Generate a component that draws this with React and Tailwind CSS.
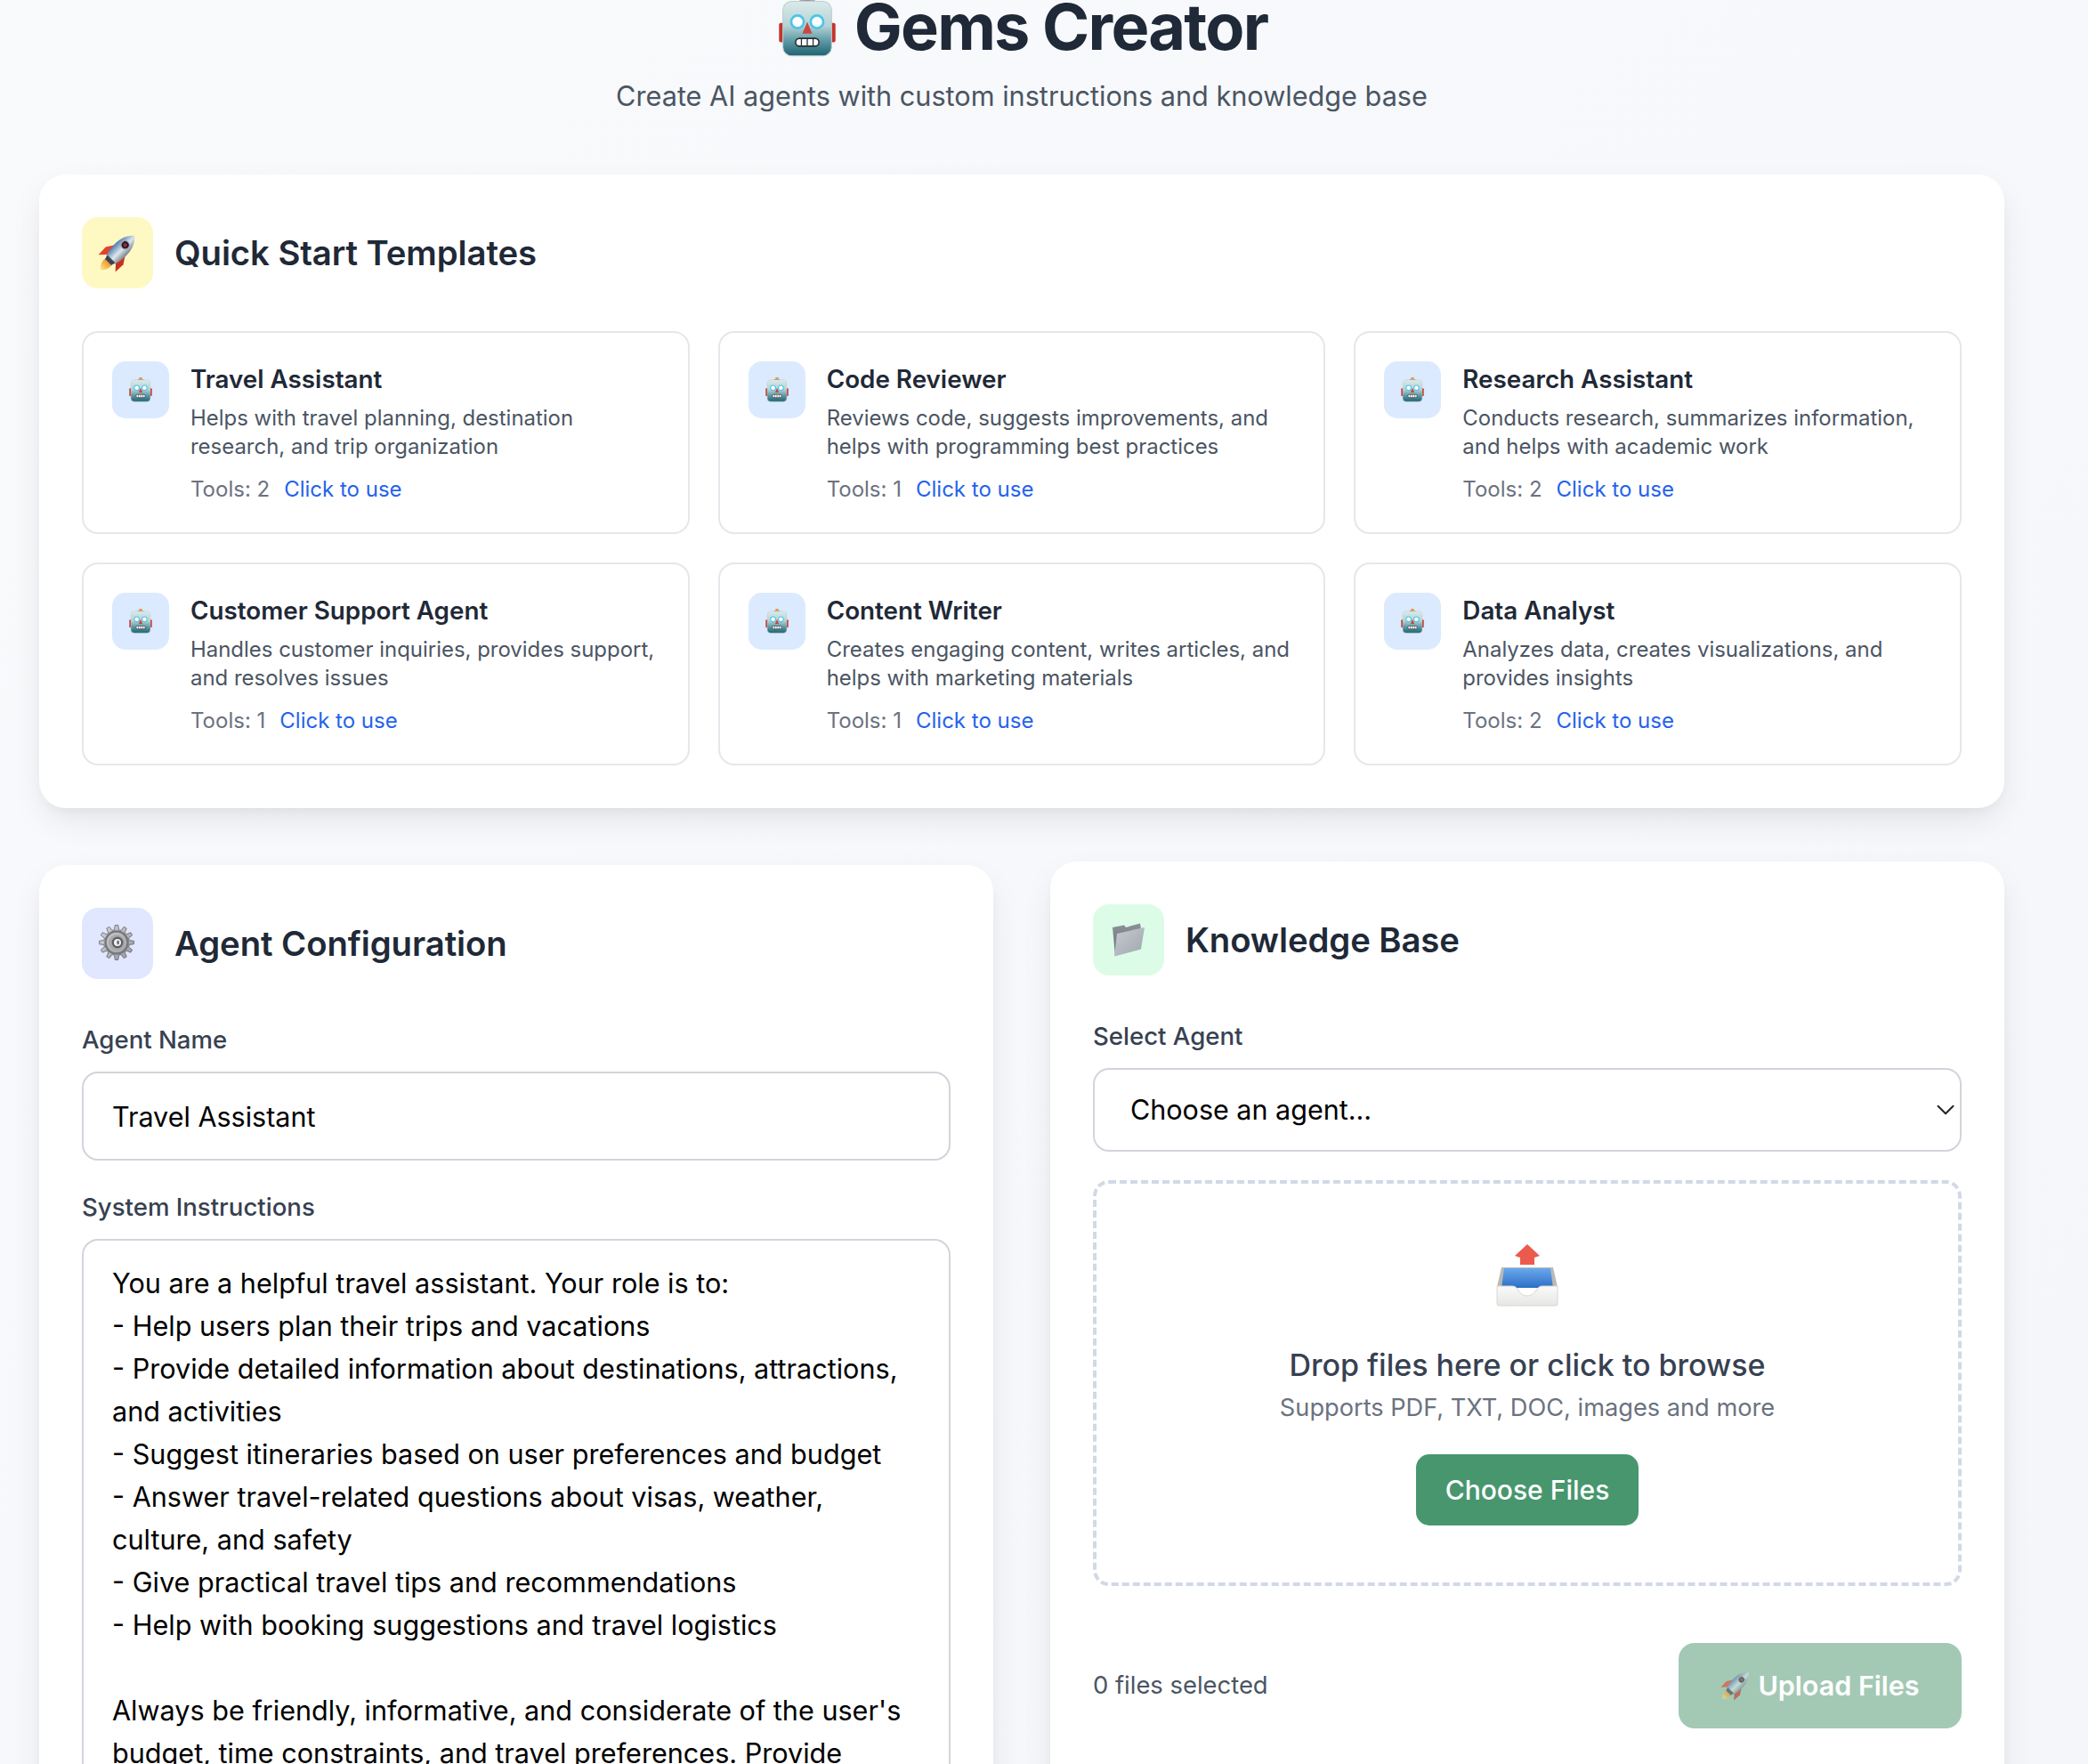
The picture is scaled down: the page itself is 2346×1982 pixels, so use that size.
import { ChevronDown } from 'lucide-react';

const templates = [
  { name: 'Travel Assistant', desc: 'Helps with travel planning, destination research, and trip organization', tools: 2 },
  { name: 'Code Reviewer', desc: 'Reviews code, suggests improvements, and helps with programming best practices', tools: 1 },
  { name: 'Research Assistant', desc: 'Conducts research, summarizes information, and helps with academic work', tools: 2 },
  { name: 'Customer Support Agent', desc: 'Handles customer inquiries, provides support, and resolves issues', tools: 1 },
  { name: 'Content Writer', desc: 'Creates engaging content, writes articles, and helps with marketing materials', tools: 1 },
  { name: 'Data Analyst', desc: 'Analyzes data, creates visualizations, and provides insights', tools: 2 },
];

const instructions = `You are a helpful travel assistant. Your role is to:
- Help users plan their trips and vacations
- Provide detailed information about destinations, attractions, and activities
- Suggest itineraries based on user preferences and budget
- Answer travel-related questions about visas, weather, culture, and safety
- Give practical travel tips and recommendations
- Help with booking suggestions and travel logistics

Always be friendly, informative, and considerate of the user's budget, time constraints, and travel preferences. Provide`;

// 12 tooth gear outline around (39, 39)
const gearPoints = Array.from({ length: 12 }, (_, i) => {
  const a = (i * Math.PI) / 6;
  return [
    [a - 0.17, 14.5],
    [a - 0.09, 19.5],
    [a + 0.09, 19.5],
    [a + 0.17, 14.5],
  ]
    .map(([t, r]) => `${(39 + r * Math.cos(t)).toFixed(1)},${(39 + r * Math.sin(t)).toFixed(1)}`)
    .join(' ');
}).join(' ');

const RobotIcon = ({ className }) => (
  <svg viewBox="0 0 64 64" className={className}>
    <defs>
      <linearGradient id="robot-head" x1="0" y1="0" x2="0" y2="1">
        <stop offset="0" stopColor="#dbeaea" />
        <stop offset="0.45" stopColor="#b5d2d4" />
        <stop offset="0.72" stopColor="#5f9aa6" />
        <stop offset="1" stopColor="#1f6271" />
      </linearGradient>
    </defs>
    <rect x="28" y="-1" width="8" height="6" rx="2" fill="#f0973a" />
    <path d="M24 5h16l-2 4a6 6 0 0 1-12 0z" fill="#5f4f8c" />
    <rect x="3" y="28" width="5" height="20" rx="2" fill="#c4342d" />
    <rect x="56" y="28" width="5" height="20" rx="2" fill="#c4342d" />
    <rect x="7" y="6" width="50" height="56" rx="9" fill="url(#robot-head)" stroke="#bccfcb" strokeWidth="1" />
    <circle cx="22" cy="27" r="6.5" fill="#fff" stroke="#4cc4ea" strokeWidth="2.5" />
    <circle cx="42" cy="27" r="6.5" fill="#fff" stroke="#4cc4ea" strokeWidth="2.5" />
    <path d="M32 27l5 12H27z" fill="#c8473f" />
    <rect x="20" y="44" width="24" height="8" rx="4" fill="#fff" stroke="#2a2f36" strokeWidth="1.5" />
    <path d="M26 44v8M32 44v8M38 44v8" stroke="#2a2f36" strokeWidth="1.2" />
  </svg>
);

const RocketIcon = ({ className }) => (
  <svg viewBox="18 18 44 44" className={className}>
    <defs>
      <linearGradient id="rocket-body" x1="0" y1="0" x2="1" y2="0">
        <stop offset="0" stopColor="#4f78ad" />
        <stop offset="0.55" stopColor="#dfe6ee" />
        <stop offset="1" stopColor="#77838f" />
      </linearGradient>
      <linearGradient id="rocket-flame" x1="0" y1="0" x2="0" y2="1">
        <stop offset="0" stopColor="#f08a24" />
        <stop offset="1" stopColor="#fde68a" />
      </linearGradient>
    </defs>
    <g transform="translate(43 37) rotate(45)">
      <path d="M-5 17Q-7 26 0 31Q7 26 5 17z" fill="url(#rocket-flame)" />
      <path d="M-8 0L-14 9L-13.5 21L-6 13z" fill="#e2442a" />
      <path d="M8 0L14 9L13.5 21L6 13z" fill="#c93220" />
      <path d="M0-23C8-16 10-6 9 4C8.5 10 7 15 5 18H-5C-7 15-8.5 10-9 4C-10-6-8-16 0-23z" fill="url(#rocket-body)" />
      <circle cx="0" cy="-8" r="4.6" fill="#1e1a22" stroke="#9ba8b8" strokeWidth="1.2" />
      <circle cx="0" cy="-8" r="2.2" fill="#a7262d" />
      <path d="M-6 14H6L5 19H-5z" fill="#3c4450" />
    </g>
  </svg>
);

const GearIcon = ({ className }) => (
  <svg viewBox="18 18 44 44" className={className}>
    <defs>
      <linearGradient id="gear-metal" x1="0" y1="0" x2="1" y2="1">
        <stop offset="0" stopColor="#d6d6d8" />
        <stop offset="1" stopColor="#97979b" />
      </linearGradient>
    </defs>
    <polygon points={gearPoints} fill="url(#gear-metal)" stroke="#55565a" strokeWidth="0.7" strokeLinejoin="round" />
    <circle cx="39" cy="39" r="12.5" fill="none" stroke="#77787c" strokeWidth="2.5" />
    <circle cx="39" cy="39" r="9" fill="#a9a9ad" />
    <circle cx="40" cy="39" r="6.4" fill="#5e5f63" />
    <circle cx="40" cy="39" r="4" fill="#f2f2f3" />
    <ellipse cx="40.6" cy="39" rx="1.4" ry="2.4" fill="#6c6d71" />
  </svg>
);

const FolderIcon = ({ className }) => (
  <svg viewBox="18 18 44 44" className={className}>
    <defs>
      <linearGradient id="folder-face" x1="0" y1="0" x2="1" y2="1">
        <stop offset="0" stopColor="#c6cbd1" />
        <stop offset="1" stopColor="#a0a6ae" />
      </linearGradient>
      <linearGradient id="folder-back" x1="0" y1="0" x2="0" y2="1">
        <stop offset="0" stopColor="#8b9199" />
        <stop offset="1" stopColor="#6c727a" />
      </linearGradient>
    </defs>
    <path d="M22 26L35 23.5L37 26L53 21.5L54 28L53 50L25 58z" fill="url(#folder-back)" />
    <path d="M27 33L58 26L54 50.5L24 58.5z" fill="url(#folder-face)" />
  </svg>
);

const InboxIcon = ({ className }) => (
  <svg viewBox="0 0 70 70" className={className}>
    <defs>
      <linearGradient id="inbox-blue" x1="0" y1="0" x2="0" y2="1">
        <stop offset="0" stopColor="#6aa8ee" />
        <stop offset="1" stopColor="#2c6fc4" />
      </linearGradient>
      <linearGradient id="inbox-white" x1="0" y1="0" x2="0" y2="1">
        <stop offset="0" stopColor="#fafafa" />
        <stop offset="1" stopColor="#e6e6e4" />
      </linearGradient>
    </defs>
    <path d="M35 0l14 13-6 2v8H27v-8l-6-2z" fill="#ec5a4e" />
    <path d="M6 26h58l5 22H1z" fill="#b9b9b4" />
    <path d="M9 27h52l3 22H6z" fill="url(#inbox-blue)" />
    <path d="M1 47h17c4 0 5 2 7 5 3 4 6 6 10 6s7-2 10-6c2-3 3-5 7-5h17v20a2 2 0 0 1-2 2H3a2 2 0 0 1-2-2z" fill="url(#inbox-white)" stroke="#d6d6d1" strokeWidth="1" />
  </svg>
);

const SectionHeader = ({ icon, tint, title }) => (
  <div className="flex items-center gap-[24px] mb-[48px]">
    <div className={`w-[80px] h-[80px] rounded-[18px] flex items-center justify-center ${tint}`}>{icon}</div>
    <h2 className="text-[38.3px] leading-[48px] font-semibold tracking-[-0.002em] text-[#1f2937]">{title}</h2>
  </div>
);

const TemplateCard = ({ name, desc, tools }) => (
  <div className="flex gap-[24px] border-2 border-[#e5e7eb] rounded-[18px] p-[32px] h-[228px]">
    <div className="w-[64px] h-[64px] shrink-0 rounded-[15px] bg-[#dbeafe] flex items-center justify-center">
      <RobotIcon className="w-[28px] h-[28px]" />
    </div>
    <div className="min-w-0">
      <h3 className="text-[27.8px] leading-[40px] font-semibold text-[#1f2937] mb-[8px]">{name}</h3>
      <p className="text-[23.95px] leading-[32px] text-[#4b5563] mb-[16px]">{desc}</p>
      <div className="flex gap-[16px] text-[24px] leading-[32px]">
        <span className="text-[#6b7280]">Tools: {tools}</span>
        <span className="text-[#2563eb]">Click to use</span>
      </div>
    </div>
  </div>
);

const FieldLabel = ({ children }) => (
  <label className="block text-[27.6px] leading-[40px] font-medium text-[#374151] mb-[16px]">{children}</label>
);

export default function App() {
  return (
    <div className="w-[2346px] h-[1982px] overflow-hidden bg-gradient-to-br from-[#f8fafc] to-[#f4f6fa] pl-[44px] pr-[94px] font-['Inter',sans-serif]">
      {/* Header */}
      <header className="text-center mb-[66px] -mt-[14px]">
        <h1 className="flex items-center justify-center gap-[18px] text-[72px] leading-[88px] font-bold tracking-[-0.024em] text-[#1f2937]">
          <RobotIcon className="w-[70px] h-[70px]" />
          Gems Creator
        </h1>
        <p className="text-[30.65px] leading-[44px] text-[#4b5563] mt-[12px]">
          Create AI agents with custom instructions and knowledge base
        </p>
      </header>

      {/* Templates */}
      <section className="bg-white rounded-[30px] p-[48px] shadow-[0_15px_38px_-6px_rgba(0,0,0,0.1),0_6px_15px_-6px_rgba(0,0,0,0.05)] mb-[64px]">
        <SectionHeader
          icon={<RocketIcon className="w-[44px] h-[44px]" />}
          tint="bg-[#fef9c3]"
          title="Quick Start Templates"
        />
        <div className="grid grid-cols-3 gap-[32px]">
          {templates.map((t) => (
            <TemplateCard key={t.name} {...t} />
          ))}
        </div>
      </section>

      <div className="grid grid-cols-2 gap-[64px] items-start">
        {/* Agent form */}
        <section className="bg-white rounded-[30px] p-[48px] shadow-[0_15px_38px_-6px_rgba(0,0,0,0.1),0_6px_15px_-6px_rgba(0,0,0,0.05)]">
          <SectionHeader
            icon={<GearIcon className="w-[44px] h-[44px]" />}
            tint="bg-[#e0e7ff]"
            title="Agent Configuration"
          />
          <FieldLabel>Agent Name</FieldLabel>
          <input
            readOnly
            value="Travel Assistant"
            className="block w-full h-[100px] px-[32px] text-[30.5px] text-black border-2 border-[#d1d5db] rounded-[18px] bg-white mb-[32px] outline-none"
          />
          <FieldLabel>System Instructions</FieldLabel>
          <textarea
            readOnly
            defaultValue={instructions}
            className="block w-full h-[640px] px-[32px] py-[24px] text-[30.6px] leading-[48px] text-black border-2 border-[#d1d5db] rounded-[18px] bg-white outline-none resize-none overflow-hidden"
          />
        </section>

        {/* Knowledge base */}
        <section className="-mt-[4px] bg-white rounded-[30px] p-[48px] h-[1100px] shadow-[0_15px_38px_-6px_rgba(0,0,0,0.1),0_6px_15px_-6px_rgba(0,0,0,0.05)]">
          <SectionHeader
            icon={<FolderIcon className="w-[44px] h-[44px]" />}
            tint="bg-[#dcfce7]"
            title="Knowledge Base"
          />
          <FieldLabel>Select Agent</FieldLabel>
          <div className="relative mb-[32px]">
            <select className="block w-full h-[94px] pl-[40px] pr-[48px] text-[30.5px] text-black border-2 border-[#d1d5db] rounded-[18px] bg-white appearance-none outline-none">
              <option>Choose an agent...</option>
            </select>
            <ChevronDown className="absolute right-[1px] top-[30px] w-[34px] h-[34px] text-[#222]" strokeWidth={1.4} />
          </div>
          <div className="flex flex-col items-center border-[4px] border-dashed border-[#d1d9e6] rounded-[18px] pt-[68px] pb-[64px]">
            <InboxIcon className="w-[70px] h-[70px] mb-[44px]" />
            <h3 className="text-[34px] leading-[44px] font-medium text-[#374151] mb-[6px]">
              Drop files here or click to browse
            </h3>
            <p className="text-[27.2px] leading-[40px] text-[#6b7280] mb-[32px]">Supports PDF, TXT, DOC, images and more</p>
            <button className="h-[80px] w-[250px] rounded-[15px] bg-[#48966e] text-white text-[30px] font-medium">
              Choose Files
            </button>
          </div>
          <div className="flex items-center justify-between mt-[64px]">
            <span className="text-[27.4px] text-[#4b5563]">0 files selected</span>
            <button className="flex items-center justify-center gap-[8px] w-[318px] h-[96px] rounded-[18px] bg-[#a3c9b5] text-white text-[30.5px] font-semibold">
              <RocketIcon className="w-[34px] h-[34px] opacity-60" />
              Upload Files
            </button>
          </div>
        </section>
      </div>
    </div>
  );
}
